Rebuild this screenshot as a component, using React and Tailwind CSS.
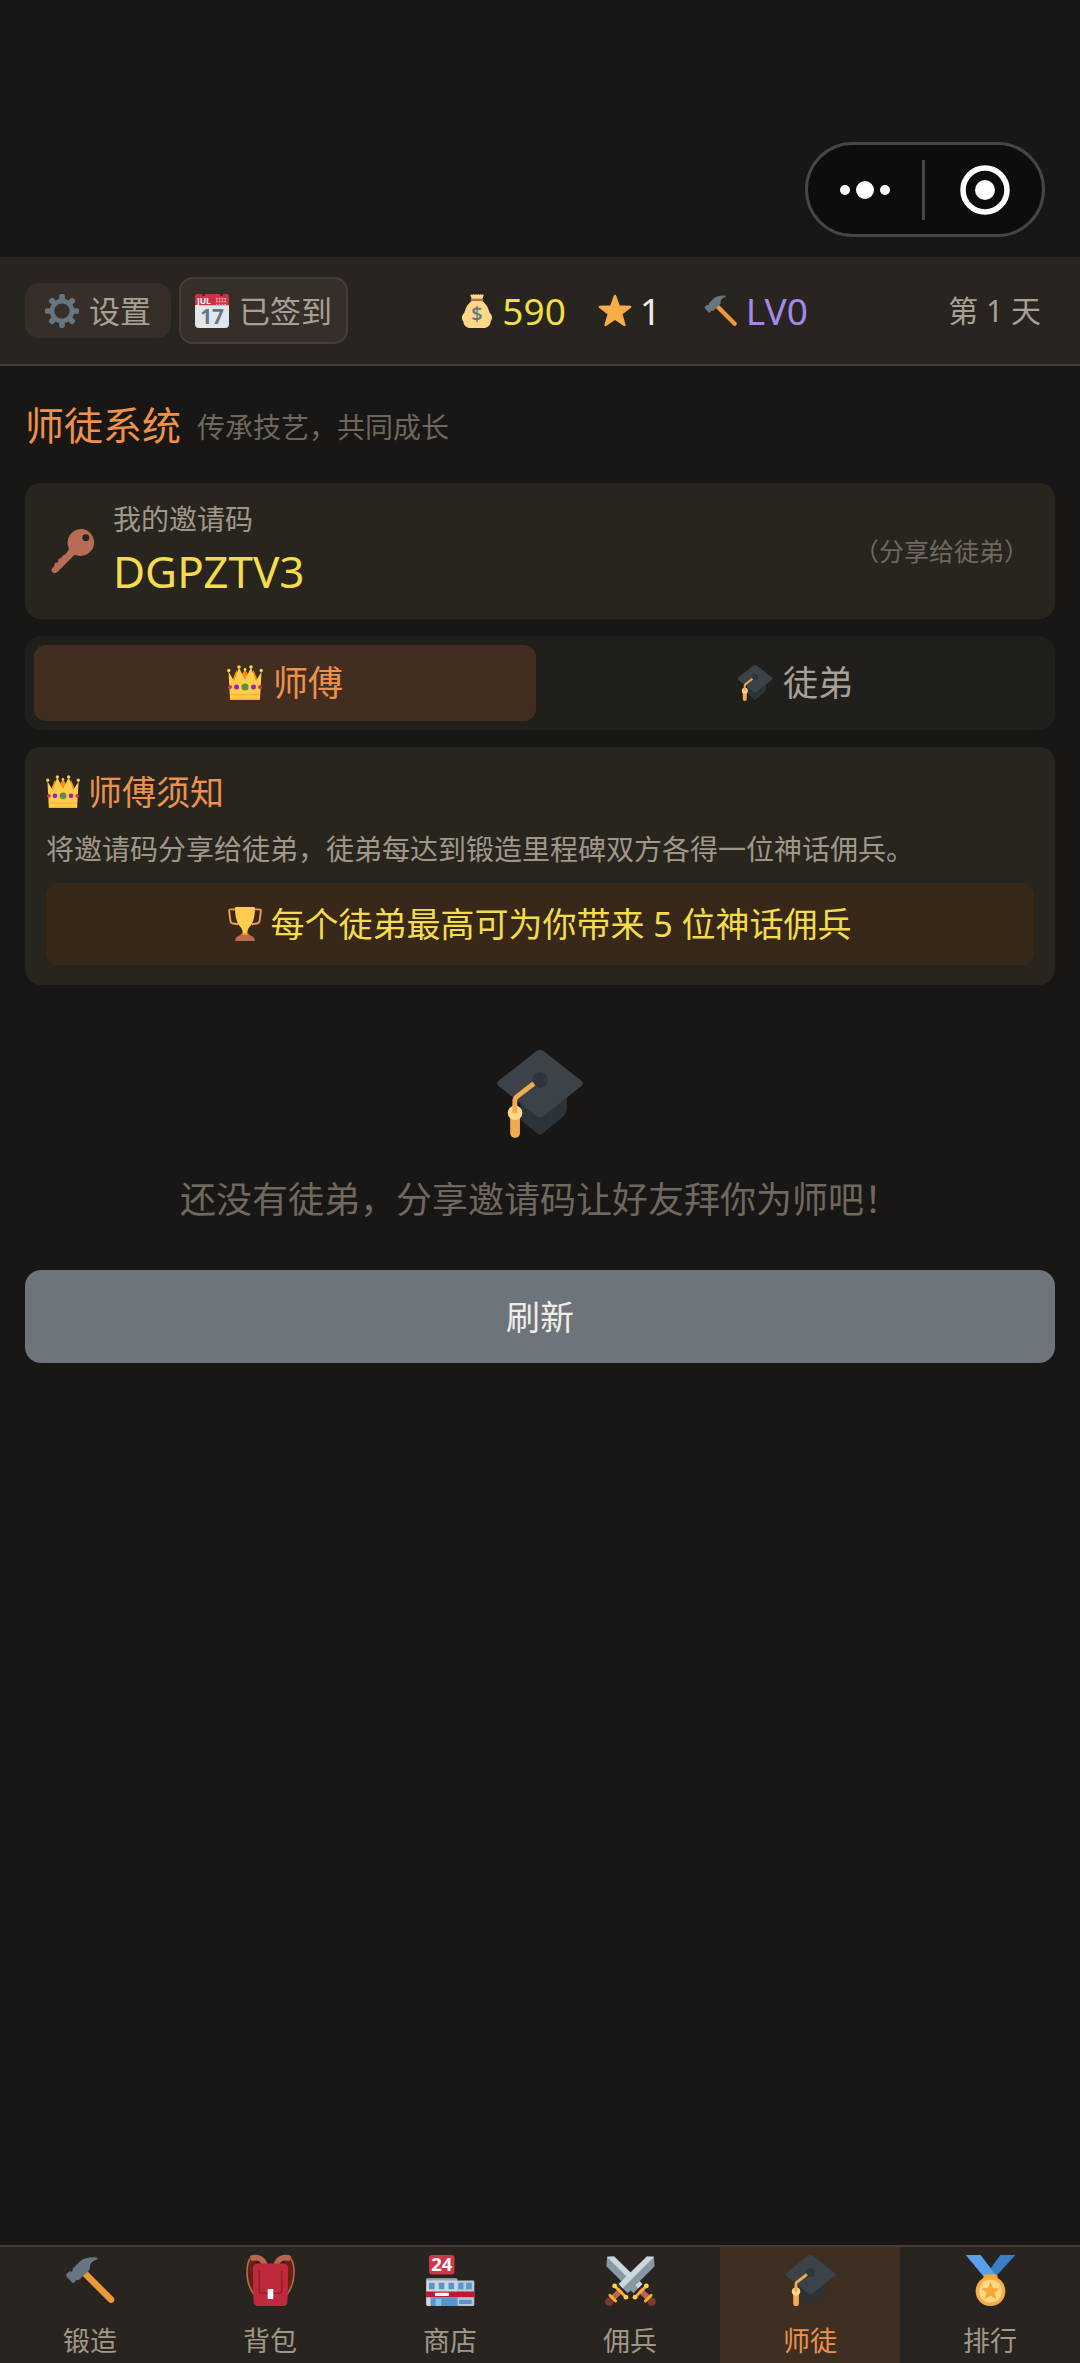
import { useState } from 'react'
import clsx from 'clsx'

function Icon({ className, children }) {
  return (
    <svg viewBox="0 0 36 36" className={clsx('shrink-0 overflow-visible', className)} aria-hidden="true">
      {children}
    </svg>
  )
}

function GearIcon({ className }) {
  return (
    <Icon className={className}>
      <path
        fill="#66757F"
        d="M34 15h-3.362c-.324-1.369-.864-2.651-1.582-3.814l2.379-2.379c.781-.781.781-2.048 0-2.829l-1.414-1.414c-.781-.781-2.047-.781-2.828 0l-2.379 2.379C23.65 6.225 22.369 5.686 21 5.362V2c0-1.104-.896-2-2-2h-2c-1.104 0-2 .896-2 2v3.362c-1.369.324-2.651.864-3.814 1.582L8.808 4.565c-.781-.781-2.048-.781-2.828 0L4.565 5.979c-.781.781-.781 2.048-.001 2.829l2.379 2.379C6.225 12.35 5.686 13.632 5.362 15H2c-1.104 0-2 .896-2 2v2c0 1.104.896 2 2 2h3.362c.324 1.368.864 2.65 1.582 3.813l-2.379 2.379c-.78.78-.78 2.048.001 2.829l1.414 1.414c.78.78 2.047.78 2.828 0l2.379-2.379c1.163.719 2.445 1.258 3.814 1.582V34c0 1.104.896 2 2 2h2c1.104 0 2-.896 2-2v-3.362c1.368-.324 2.65-.864 3.813-1.582l2.379 2.379c.781.781 2.047.781 2.828 0l1.414-1.414c.781-.781.781-2.048 0-2.829l-2.379-2.379c.719-1.163 1.258-2.445 1.582-3.814H34c1.104 0 2-.896 2-2v-2C36 15.896 35.104 15 34 15zM18 26c-4.418 0-8-3.582-8-8s3.582-8 8-8 8 3.582 8 8-3.582 8-8 8z"
      />
    </Icon>
  )
}

function CalendarIcon({ className }) {
  return (
    <Icon className={className}>
      <path fill="#E0E7EC" d="M0 10h36v22a4 4 0 0 1-4 4H4a4 4 0 0 1-4-4z" />
      <path fill="#CB3245" d="M3 0h4a2 2 0 0 0 4 0h15a2 2 0 0 0 4 0h3a3 3 0 0 1 3 3v9H0V3a3 3 0 0 1 3-3z" />
      <g fill="#F4ABBA">
        {[23, 26, 29, 32].map((x) => (
          <g key={x}>
            <circle cx={x} cy="5" r="1" />
            <circle cx={x} cy="8" r="1" />
            <circle cx={x} cy="11" r="0.8" />
          </g>
        ))}
      </g>
      <text x="2" y="11" fontSize="9" fontWeight="700" fill="#fff" fontFamily="Open Sans, sans-serif">JUL</text>
      <text x="18" y="32" fontSize="22" fontWeight="700" fill="#66757F" textAnchor="middle" fontFamily="Open Sans, sans-serif">17</text>
    </Icon>
  )
}

function MoneyBagIcon({ className }) {
  return (
    <Icon className={className}>
      <path
        fill="#FDD888"
        d="M11 1.5c0-1 1.2-1.3 1.8-.5.6-1 2-1 2.6 0 .6-1 2-1 2.6 0 .6-1 2-1 2.6 0 .6-1 2-1 2.6 0 .9-.8 2-.2 1.8.9L23.5 5.500v2c5 3.500 6.500 8 8 12.500C34 22 35 25.500 32.500 29c-.2 4-3.500 7-7.500 7H11c-4 0-7.300-3-7.500-7C1 25.500 2 22 4.500 20 6 15.500 7.500 11 12.500 7.500v-2z"
      />
      <path fill="#BF6952" d="M12 5h12c1 0 1 2.500 0 2.500H12C11 7.500 11 5 12 5z" />
      <text x="18" y="29" fontSize="21" fontWeight="600" fill="#67757F" textAnchor="middle" fontFamily="Open Sans, sans-serif">$</text>
    </Icon>
  )
}

function StarIcon({ className }) {
  return (
    <Icon className={className}>
      <path
        fill="#F9AE45"
        stroke="#F9AE45"
        strokeWidth="2.5"
        strokeLinejoin="round"
        d="M18 2l4.100 11.200 12 .4-9.500 7.300 3.400 11.900L18 26l-10 6.800 3.400-11.900-9.500-7.300 12-.4z"
      />
    </Icon>
  )
}

function HammerIcon({ className }) {
  return (
    <Icon className={className}>
      <path d="M14 13l18.500 18.500" stroke="#EE9A38" strokeWidth="4.600" strokeLinecap="round" />
      <path
        fill="#66757F"
        d="M1.200 13.300l2-1.900 1.800.4.500-2.300 5-5C13.500 1.800 18 1.200 22.300 1.700c.9.200.9 1.400.1 1.700-3.900.9-5.100 3.600-4.800 6.400L16 12l-3.500 3-3 3-1.500-.5-1.200 1.800c-.6.7-1.500.5-2-.1l-3.600-3.900c-.6-.8-.6-1.400 0-2z"
      />
    </Icon>
  )
}

function KeyIcon({ className }) {
  return (
    <Icon className={className}>
      <path
        fill="#B96C55"
        fillRule="evenodd"
        d="M24.500 0a11 11 0 0 0-10 15.500c.3.800 0 1.600-.5 2.100l-2.300 3.300c-.5.600-1.200.5-1.900.7-.8.300-.6 1.200-1 1.700-.6.800-1.800.6-2.400 1.200-.8.800-.3 1.800-.8 2.400-.6.800-1.900.5-2.500 1.200-.7.900.1 1.700-.6 2.500l-1.500 1.600c-1.300 1.500-.3 3.600 1.500 3.800 1.400.1 2.600-.7 3.400-1.500L18.300 22c.6-.6 1.500-.9 2.400-.6A11 11 0 1 0 24.500 0zM28.500 4.300a2.800 2.800 0 1 1 0 5.600 2.800 2.800 0 0 1 0-5.600z"
      />
    </Icon>
  )
}

function CrownIcon({ className }) {
  return (
    <Icon className={className}>
      <path fill="#F4900C" d="M5 16L9.500 5l3 9 5.500-10 5.500 10 3-9L31 16v8H5z" />
      <g fill="#FFCC4D">
        <path d="M3 34L1.500 6.500 7 16l5-13.500L18 15l6-12.500L29 16l5.500-9.500L33 34z" />
        <circle cx="1.800" cy="5.500" r="1.700" />
        <circle cx="12" cy="2" r="1.800" />
        <circle cx="24" cy="2" r="1.800" />
        <circle cx="34.200" cy="5.500" r="1.700" />
        <circle cx="18" cy="4.500" r="1.400" />
      </g>
      <path fill="#FFAC33" d="M3 29h30v1.300H3zM3 33.500h30v1.500H3z" />
      <circle cx="18" cy="22" r="3.600" fill="#5C913B" />
      <circle cx="9.500" cy="22" r="2.500" fill="#9225B5" />
      <circle cx="26.500" cy="22" r="2.500" fill="#9225B5" />
      <circle cx="3" cy="22" r="2" fill="#DD2E44" />
      <circle cx="33" cy="22" r="2" fill="#DD2E44" />
    </Icon>
  )
}

function GraduationIcon({ className }) {
  return (
    <Icon className={className}>
      <path fill="#2C3439" d="M10 19h19v4.300c0 2-1 3.600-2.500 4.700L19 34.200c-.6.500-1.400.5-2 0L10 28.500z" />
      <path
        fill="#3B4248"
        d="M16.300.6c1-.8 2.400-.8 3.400 0l15.200 12c.8.600.8 1.600 0 2.200l-15.200 12c-1 .8-2.400.8-3.400 0l-15.200-12c-.8-.6-.8-1.600 0-2.200z"
      />
      <circle cx="18" cy="12.300" r="3.200" fill="#2F363B" />
      <path d="M7.800 26v8" stroke="#F0AB50" strokeWidth="4" strokeLinecap="round" />
      <circle cx="7.800" cy="25.700" r="3" fill="#FBD988" />
      <path d="M15.500 13.700L8.400 19.200c-.5.400-.7.900-.7 1.400v5.300" fill="none" stroke="#F0AB50" strokeWidth="2" />
    </Icon>
  )
}

function TrophyIcon({ className }) {
  return (
    <Icon className={className}>
      <g fill="none" stroke="#F29A5C" strokeWidth="2">
        <path d="M9 2.500H3c-1.300 0-2 .8-1.800 2l1.300 10c.2 1.800 1.200 2.800 2.800 3l5.700.8" />
        <path d="M27 2.500h6c1.300 0 2 .8 1.800 2l-1.300 10c-.2 1.800-1.200 2.800-2.800 3l-5.700.8" />
      </g>
      <path
        fill="#FFCC4D"
        d="M7.500 1c0-.6.500-1 1-1h19c.5 0 1 .4 1 1 0 9-1.500 15.500-5.500 20-1.500 1.700-2.500 4-2.500 6v3h-5v-3c0-2-1-4.300-2.500-6-4-4.500-5.500-11-5.500-20z"
      />
      <path fill="#F4900C" fillOpacity="0.7" d="M15 27.500h6L24.500 31h-13z" />
      <path fill="#C1694F" d="M12 30.500h12c1.700 0 3 1.500 4 3 .8 1.300.5 2.500-1 2.500H9c-1.500 0-1.800-1.200-1-2.500 1-1.500 2.300-3 4-3z" />
    </Icon>
  )
}

function BackpackIcon({ className }) {
  return (
    <Icon className={className}>
      <path fill="#662113" d="M8 3C3 2 1 6 1.500 13 2 20 4 26 7 29V10zM28 3c5-1 7 3 6.500 10-.5 7-2.500 13-5.500 16V10z" />
      <g fill="none" stroke="#B5674F">
        <path strokeWidth="1.200" d="M5 1.500C.5 4-.5 19 6.500 28M31 1.500C35.500 4 36.500 19 29.500 28" />
        <path strokeWidth="4" d="M4 2.500c4-1.500 9-.5 10 5M32 2.500c-4-1.500-9-.5-10 5" />
      </g>
      <path fill="#BE2A3C" d="M9 6h18a3.500 3.500 0 0 1 3.500 3.500L30 33a3 3 0 0 1-3 3H9a3 3 0 0 1-3-3L5.500 9.500A3.500 3.500 0 0 1 9 6z" />
      <path fill="none" stroke="#8F1D2C" strokeWidth="1" d="M10 11v13.500c0 1.500 1 2.500 2.500 2.500h11c1.500 0 2.500-1 2.500-2.500V11" />
      <rect x="16" y="24" width="4" height="7" rx="0.4" fill="#F5F8FA" />
    </Icon>
  )
}

function StoreIcon({ className }) {
  return (
    <Icon className={className}>
      <rect x="22" y="18" width="12.800" height="18" rx="1" fill="#B8C8D4" />
      <rect x="0.8" y="16.500" width="22" height="19.500" rx="1" fill="#CCD6DD" />
      <rect x="0.8" y="16.500" width="22" height="1.500" rx="0.5" fill="#92A5B2" />
      <path fill="#BE1931" d="M.8 25.800h34v4H.8z" />
      <g fill="#5C93CE">
        <path d="M2.800 19.500h4v4.600h-4zM9.700 19.500h4v4.600h-4zM16.600 19.500h4v4.600h-4zM23.500 19.500h3.600v4.600h-3.600zM29 19.500h4v4.600h-4zM24 31.500h9v3h-9z" />
        <path d="M4 29.800h19V36H4z" />
      </g>
      <path fill="#88BDF0" d="M7.500 31h4v5h-4z" />
      <rect x="7" y="26.600" width="10" height="2.300" rx="0.6" fill="#fff" />
      <rect x="2.800" y="0" width="18" height="13.700" rx="2" fill="#CF3848" />
      <text x="11.800" y="11.500" fontSize="13" fontWeight="700" fill="#fff" textAnchor="middle" fontFamily="Open Sans, sans-serif">24</text>
    </Icon>
  )
}

function Sword() {
  return (
    <>
      <path fill="#8899A6" d="M34.500 1.200L35 8 16 27l-5.500-5.500L29.500 1z" />
      <path fill="#CCD6DD" d="M34.700 1.200L29.500 1l-20 19.500 3 3z" />
      <path d="M11.500 24.500L4 32" stroke="#B5674F" strokeWidth="4" />
      <circle cx="3" cy="33" r="2.900" fill="#7A3A2B" />
      <path d="M7 22l7.500 7.500M3.500 28.500l4 4" stroke="#FFAC33" strokeWidth="2" strokeLinecap="round" />
      <circle cx="6.800" cy="21.800" r="1.700" fill="#FFCC4D" />
      <circle cx="14.800" cy="29.800" r="1.700" fill="#FFCC4D" />
    </>
  )
}

function SwordsIcon({ className }) {
  return (
    <Icon className={className}>
      <g transform="matrix(-1 0 0 1 36 0)">
        <Sword />
      </g>
      <Sword />
    </Icon>
  )
}

function MedalIcon({ className }) {
  return (
    <Icon className={className}>
      <path fill="#3B7FC4" d="M25 0h10.500L22 15h-8z" />
      <path fill="#5C9FEA" d="M.5 0H11l11.500 15H13z" />
      <rect x="13" y="13.500" width="10" height="5" rx="2" fill="#F4A62C" />
      <circle cx="18" cy="25.500" r="10.500" fill="#F5AE45" />
      <circle cx="18" cy="25.500" r="8" fill="#FFD983" />
      <path
        fill="#F4A83C"
        d="M18 18.700l1.800 4.600 4.900.3-3.800 3.100 1.300 4.700-4.200-2.700-4.200 2.700 1.300-4.700-3.800-3.100 4.900-.3z"
      />
    </Icon>
  )
}

const NAV_ITEMS = [
  { id: 'forge', label: '锻造', icon: HammerIcon },
  { id: 'bag', label: '背包', icon: BackpackIcon },
  { id: 'shop', label: '商店', icon: StoreIcon },
  { id: 'mercenary', label: '佣兵', icon: SwordsIcon },
  { id: 'mentor', label: '师徒', icon: GraduationIcon },
  { id: 'rank', label: '排行', icon: MedalIcon },
]

const TABS = [
  { id: 'master', label: '师傅', icon: CrownIcon },
  { id: 'apprentice', label: '徒弟', icon: GraduationIcon },
]

// Mini-program capsule in the top right corner
function Capsule() {
  return (
    <div className="flex h-[95px] w-[240px] items-center rounded-full border-3 border-[#464644] bg-[#0d0d0b]">
      <button type="button" aria-label="更多" className="flex flex-1 justify-center">
        <svg viewBox="0 0 50 18" className="h-[18px] w-[50px]" fill="#fff">
          <circle cx="5" cy="9" r="5" />
          <circle cx="25" cy="9" r="9" />
          <circle cx="45" cy="9" r="5" />
        </svg>
      </button>
      <div className="h-[60px] w-[3px] bg-[#464644]" />
      <button type="button" aria-label="关闭" className="flex flex-1 justify-center pl-1">
        <svg viewBox="0 0 50 50" className="size-[50px]">
          <circle cx="25" cy="25" r="22" fill="none" stroke="#fff" strokeWidth="5.5" />
          <circle cx="25" cy="25" r="10" fill="#fff" />
        </svg>
      </button>
    </div>
  )
}

function TopBar() {
  return (
    <header className="flex h-[109px] items-center border-b-2 border-[#413a34] bg-[#282420] px-[25px]">
      <div className="flex items-center gap-2">
        <button type="button" className="flex h-[55px] items-center gap-[10px] rounded-[14px] bg-[#362e28] px-5 text-[31px] leading-[40px] text-[#a8a094]">
          <GearIcon className="size-[34px]" />
          设置
        </button>
        <button type="button" className="flex h-[67px] items-center gap-[10px] rounded-[14px] border-2 border-[#453e38] bg-[#362e28] px-[14px] text-[31px] leading-[40px] text-[#a8a094]">
          <CalendarIcon className="size-[34px]" />
          已签到
        </button>
      </div>
      <div className="flex flex-1 items-center justify-center gap-8 text-[37px] leading-[44px]">
        <div className="flex items-center gap-2 text-[#f2df45]">
          <MoneyBagIcon className="size-[34px]" />
          590
        </div>
        <div className="flex min-w-[74px] items-center gap-2 text-[#f0ede6]">
          <StarIcon className="size-[34px]" />1
        </div>
        <div className="flex items-center gap-2 text-[#a588ea]">
          <HammerIcon className="size-[34px]" />
          LV0
        </div>
      </div>
      <div className="pr-[14px] pl-[28px] text-[30px] leading-[44px] text-[#a8a094]">第 1 天</div>
    </header>
  )
}

function InviteCard({ code }) {
  return (
    <section className="flex h-[136px] items-center gap-[18px] rounded-2xl bg-[#28251f] px-[26px]">
      <KeyIcon className="size-[44px]" />
      <div className="flex-1">
        <div className="text-[28px] leading-[40px] text-[#a09789]">我的邀请码</div>
        <div className="text-[44px] leading-[64px] text-[#f5dc4c]">{code}</div>
      </div>
      <span className="text-[25px] leading-[40px] text-[#6f685e]">（分享给徒弟）</span>
    </section>
  )
}

function NoticeCard() {
  return (
    <section className="rounded-2xl bg-[#28251f] px-[21px] pt-[23px] pb-5">
      <h2 className="flex items-center gap-2 text-[34px] leading-[44px] text-[#ee914d]">
        <CrownIcon className="size-[34px]" />
        师傅须知
      </h2>
      <p className="mt-[13px] text-[28px] leading-[44px] text-[#a09789]">
        将邀请码分享给徒弟，徒弟每达到锻造里程碑双方各得一位神话佣兵。
      </p>
      <div className="mt-3 flex h-[82px] items-center justify-center gap-2 rounded-xl bg-[#372819] text-[34px] leading-[44px] text-[#f5dc4c]">
        <TrophyIcon className="size-[34px]" />
        每个徒弟最高可为你带来 5 位神话佣兵
      </div>
    </section>
  )
}

export default function App() {
  const [tab, setTab] = useState('master')
  const [page, setPage] = useState('mentor')

  return (
    <div className="flex min-h-screen flex-col bg-[#181715] font-['Noto_Sans','Noto_Sans_CJK_SC',sans-serif]">
      <div className="flex justify-end px-[35px] pt-[142px] pb-5">
        <Capsule />
      </div>
      <TopBar />

      <main className="flex flex-1 flex-col px-[25px] pt-[31px]">
        <div className="flex items-center gap-4 pb-[30px]">
          <h1 className="text-[39px] leading-[56px] text-[#ee914d]">师徒系统</h1>
          <p className="pt-[3px] text-[28px] leading-[40px] text-[#6f685e]">传承技艺，共同成长</p>
        </div>

        <div className="flex flex-col gap-[17px]">
          <InviteCard code="DGPZTV3" />

          <div role="tablist" className="grid grid-cols-2 gap-2 rounded-2xl bg-[#211f1b] p-[9px]">
            {TABS.map(({ id, label, icon: TabIcon }) => (
              <button
                key={id}
                type="button"
                role="tab"
                aria-selected={tab === id}
                onClick={() => setTab(id)}
                className={clsx(
                  'flex h-[76px] items-center justify-center gap-[10px] rounded-xl text-[35px] leading-[44px]',
                  tab === id ? 'bg-[#422e21] text-[#ee914d]' : 'text-[#a8a094]',
                )}
              >
                <TabIcon className="size-[36px]" />
                {label}
              </button>
            ))}
          </div>

          <NoticeCard />
        </div>

        <div className="flex flex-col items-center pt-[65px]">
          <GraduationIcon className="size-[88px]" />
          <p className="mt-[36px] text-[36px] leading-[52px] text-[#6f685e]">
            还没有徒弟，分享邀请码让好友拜你为师吧！
          </p>
        </div>
        <button type="button" className="mt-[44px] h-[93px] rounded-2xl bg-[#6e747c] text-[34px] leading-[44px] text-[#f0ede6]">
          刷新
        </button>
      </main>

      <nav className="grid grid-cols-6 border-t-2 border-[#463c36] bg-[#282420]">
        {NAV_ITEMS.map(({ id, label, icon: NavIcon }) => (
          <button
            key={id}
            type="button"
            onClick={() => setPage(id)}
            className={clsx(
              'flex h-[116px] flex-col items-center justify-between pt-2 text-[27px] leading-[44px]',
              page === id ? 'bg-[#3f2f23] text-[#ee914d]' : 'text-[#a09789]',
            )}
          >
            <NavIcon className="size-[51px]" />
            {label}
          </button>
        ))}
      </nav>
    </div>
  )
}
